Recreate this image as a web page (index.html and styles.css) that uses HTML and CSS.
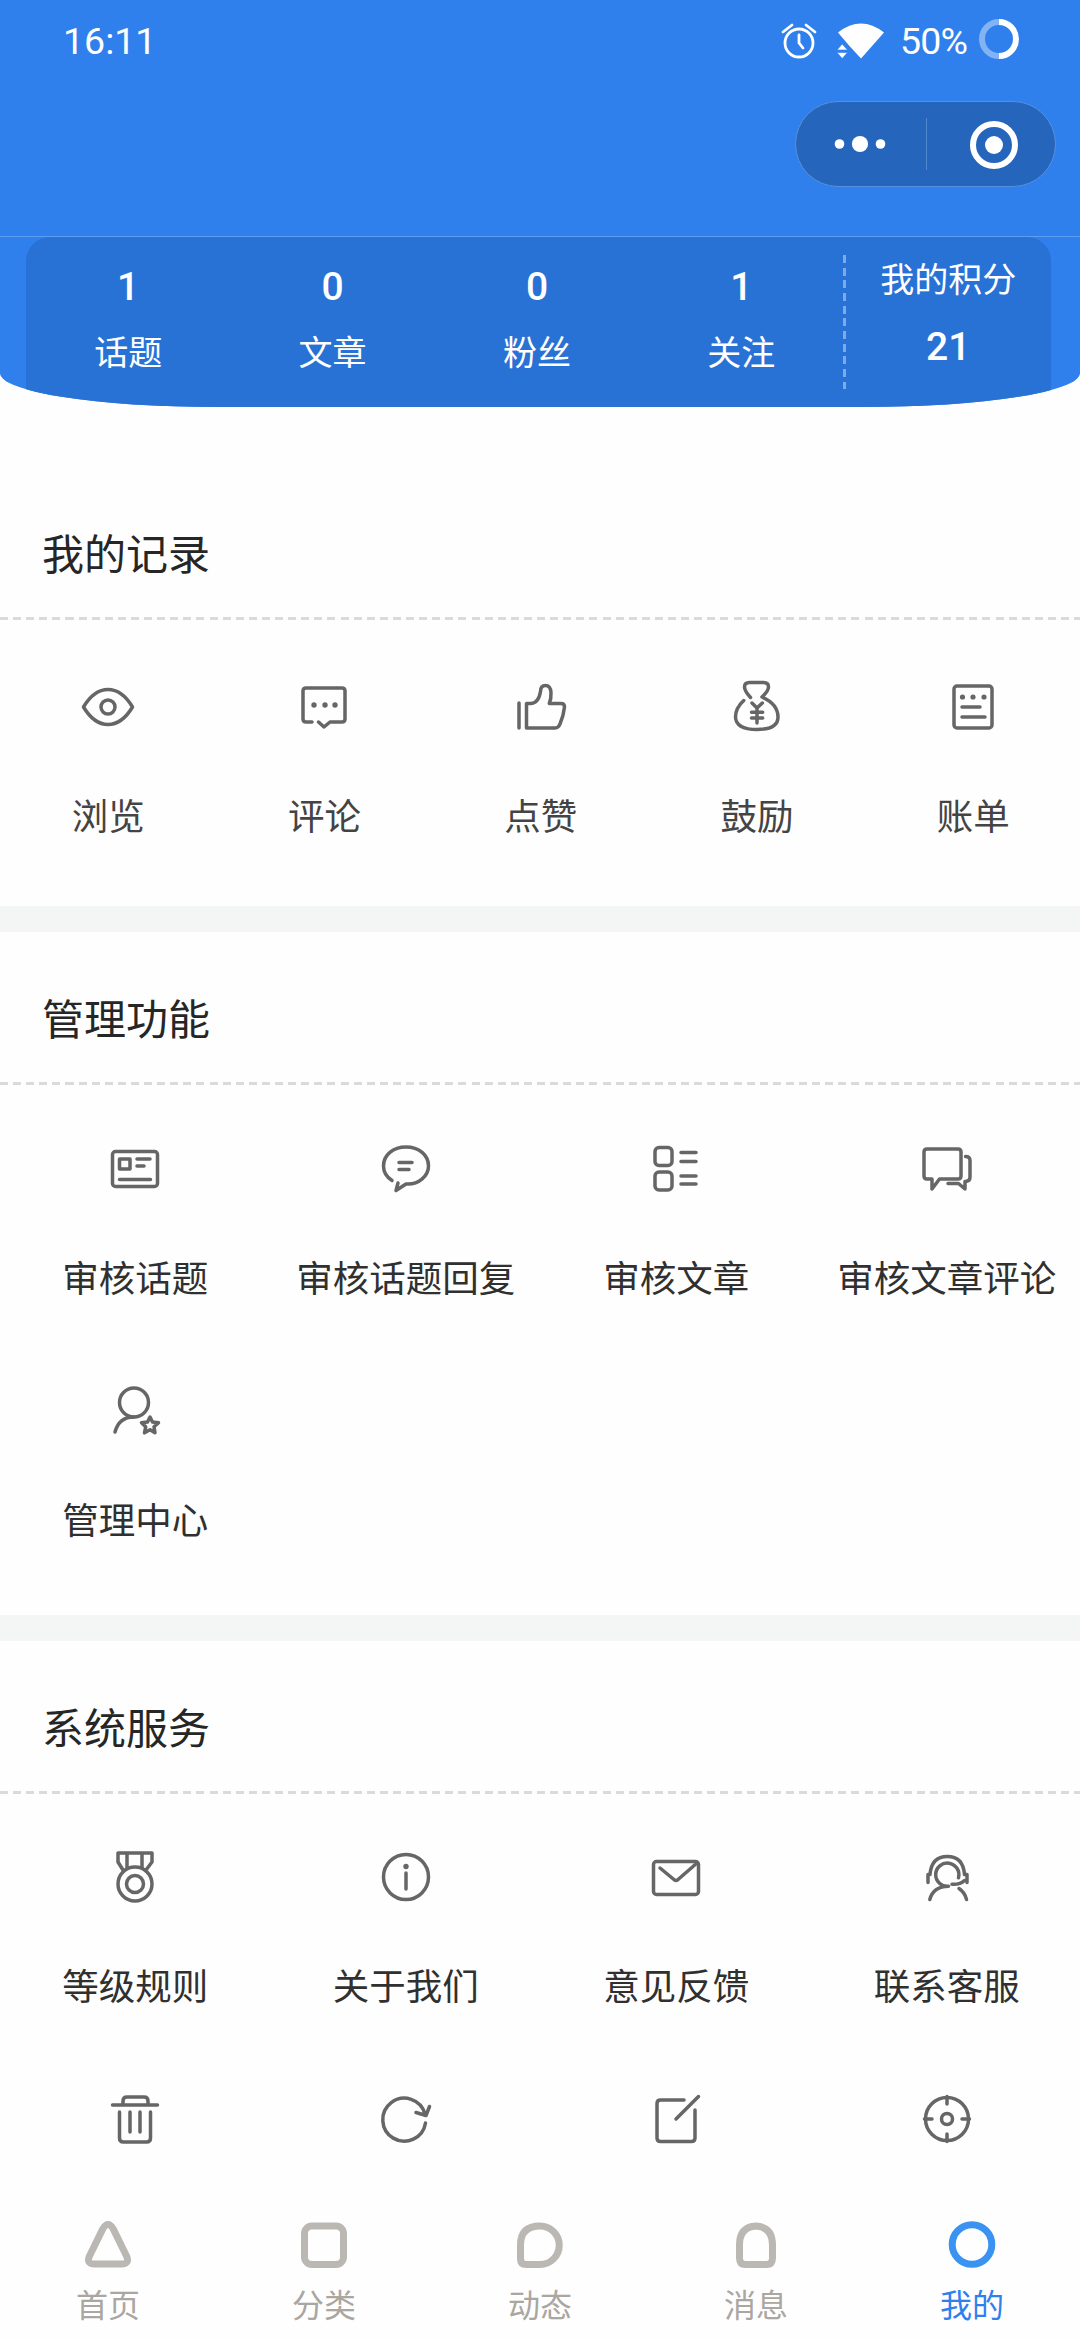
FILE: index.html
```html
<!DOCTYPE html>
<html lang="zh-CN">
<head>
<meta charset="utf-8">
<title>我的</title>
<link rel="stylesheet" href="styles.css">
</head>
<body>
<div class="app">
  <header class="nav">
    <div class="status">
      <span class="time">16:11</span>
      <div class="status-right">
        <svg class="alarm" width="38" height="38" viewBox="0 0 38 38" fill="none" stroke="#fff" stroke-width="2.8" stroke-linecap="round" stroke-linejoin="round"><circle cx="19" cy="21" r="14"/><path d="M19 13v8l4 5M3 10l9-7M35 10l-9-7"/></svg>
        <svg class="wifi" width="48" height="36" viewBox="0 0 48 36" fill="#fff"><path d="M1 9.500Q24-8.500 47 9.500L24 35.500 12 22.500z"/><path d="M0 27h10.500L5.200 21zM0 29.500h10.500L5.200 35.500z" stroke="#2f80ed" stroke-width=".6"/></svg>
        <span class="percent">50%</span>
        <svg class="battery" width="40" height="40" viewBox="0 0 40 40" fill="none" stroke="#fff" stroke-width="6"><path d="M20 3a17 17 0 0 0 0 34" opacity=".4"/><path d="M20 3a17 17 0 0 1 0 34"/></svg>
      </div>
    </div>
    <div class="capsule">
      <svg class="dots" width="52" height="20" viewBox="0 0 52 20" fill="#fff"><circle cx="5.500" cy="10" r="4.800"/><circle cx="26" cy="10" r="8.100"/><circle cx="46.500" cy="10" r="4.800"/></svg>
      <span class="divider"></span>
      <svg class="close" width="50" height="50" viewBox="0 0 50 50"><circle cx="25" cy="25" r="21" fill="none" stroke="#fff" stroke-width="6"/><circle cx="25" cy="25" r="9" fill="#fff"/></svg>
    </div>
  </header>

  <div class="hero">
    <div class="stats">
      <div class="stat"><b>1</b><span>话题</span></div>
      <div class="stat"><b>0</b><span>文章</span></div>
      <div class="stat"><b>0</b><span>粉丝</span></div>
      <div class="stat"><b>1</b><span>关注</span></div>
      <div class="rule"></div>
      <div class="stat points"><span>我的积分</span><b>21</b></div>
    </div>
  </div>

  <main class="content">
    <section class="section first">
      <h2>我的记录</h2>
      <div class="dash"></div>
      <div class="grid five">
        <div class="item"><svg viewBox="0 0 60 60"><path d="M5.500 30Q16 12.500 30 12.500T54.500 30Q44 47.500 30 47.500T5.500 30z"/><circle cx="30" cy="30" r="7"/></svg><span>浏览</span></div>
        <div class="item"><svg viewBox="0 0 60 60"><path d="M18 45h-6q-3 0-3-3V14q0-3 3-3h36q3 0 3 3v28q0 3-3 3H36l-6 5-5.500-5"/><g class="solid"><circle cx="20" cy="28" r="2.700"/><circle cx="31" cy="28" r="2.700"/><circle cx="41" cy="28" r="2.700"/></g></svg><span>评论</span></div>
        <div class="item"><svg viewBox="0 0 60 60"><path d="M8 26v25M15.500 26.500V51H44q3.500 0 5-4 3.500-8 4.500-17 0-3.500-3.500-3.500H38.300q2-5 1.700-11-.5-7-5.500-7t-5 6q-2 12-10 12z"/></svg><span>点赞</span></div>
        <div class="item"><svg viewBox="0 0 60 60"><path d="M23.500 20.500Q17.500 14 17.500 10q0-4.500 5-4.500h14q5 0 5 4.500 0 4-6.500 10Q51 27 51 40q0 12.500-21 12.500T8.500 40q0-9 8.200-16.500M25 26l5 5 5.300-5M30 31v15M24.500 35.300h11.200M24.500 41h11.200"/></svg><span>鼓励</span></div>
        <div class="item"><svg viewBox="0 0 60 60"><rect x="11" y="9" width="38" height="42" rx="3"/><path d="M19 30h18M19 40h23"/><g class="solid"><circle cx="19.500" cy="20" r="2.600"/><circle cx="30" cy="20" r="2.600"/><circle cx="41" cy="20" r="2.600"/></g></svg><span>账单</span></div>
      </div>
    </section>
    <section class="section manage">
      <h2>管理功能</h2>
      <div class="dash"></div>
      <div class="grid four">
        <div class="item"><svg viewBox="0 0 60 60"><rect x="7.500" y="12.500" width="45" height="35" rx="3"/><path d="M14.500 20h10.500v10H14.500zM32 20h13M32 27h7M14.500 40.500h31"/></svg><span>审核话题</span></div>
        <div class="item"><svg viewBox="0 0 60 60"><path d="M16 41.500Q7.500 36 7.500 27C7.500 16 17 8 30 8s22.500 8 22.500 19c0 10-10 19-22.500 18L20 51.500 22 44M23 23.500h13M23 30.500h10"/></svg><span>审核话题回复</span></div>
        <div class="item"><svg viewBox="0 0 60 60"><rect x="9" y="8.500" width="17" height="18" rx="4"/><rect x="9" y="33" width="17" height="18" rx="4"/><path d="M35 13.500h15M35 22.500h15M35 37h15M35 45h15"/></svg><span>审核文章</span></div>
        <div class="item"><svg viewBox="0 0 60 60"><path d="M10 10h31q3 0 3 3v24q0 3-3 3H22.500L15 50V40h-5q-3 0-3-3V13q0-3 3-3zM48.500 17.500q4.500 0 4.500 4V38q0 4.500-5 4.500V50l-6.500-5.500H31"/></svg><span>审核文章评论</span></div>
        <div class="item"><svg viewBox="0 0 60 60"><circle cx="29" cy="21.500" r="14.500"/><path d="M10 51q4-15 19-15M45 36l2.500 5 6 .8-4.500 4 1 6-5-3-5.500 3 1.200-6-4.200-4 6-.8z"/></svg><span>管理中心</span></div>
      </div>
    </section>
    <section class="section service">
      <h2>系统服务</h2>
      <div class="dash"></div>
      <div class="grid four">
        <div class="item"><svg viewBox="0 0 60 60"><circle cx="30" cy="37" r="17"/><circle cx="30" cy="37" r="8.500"/><path d="M18 23l-5-8V6h34v9l-6 8M22 6v15M37 6v15"/></svg><span>等级规则</span></div>
        <div class="item"><svg viewBox="0 0 60 60"><circle cx="30" cy="30" r="22.500"/><path d="M30 26v16"/><circle class="solid" cx="30" cy="19.500" r="2.700"/></svg><span>关于我们</span></div>
        <div class="item"><svg viewBox="0 0 60 60"><rect x="7.500" y="14.500" width="45" height="33" rx="3"/><path d="M14 21l14.500 12q1.500 1 3 0L51 16"/></svg><span>意见反馈</span></div>
        <div class="item"><svg viewBox="0 0 60 60"><path d="M11 35.500v-8h2Q14.500 9.500 30.300 9.500T47.500 27.500h2.500v8"/><path d="M41.500 30.700a11.600 11.600 0 1 0-10 8.500M12.800 52.500q3.500-13 18.700-13.200M42 41.500q6 4 7.500 11M35 37.300q8 .5 12.500-3.800"/></svg><span>联系客服</span></div>
        <div class="item"><svg viewBox="0 0 60 60"><path d="M7.500 16h45M18 16v-4q0-4 4-4h17q4 0 4 4v4M14.500 23v26q0 4 4 4h23q4 0 4-4V23M25 23v20M35 23v20"/></svg></div>
        <div class="item"><svg viewBox="0 0 60 60"><path d="M49.500 34A21.500 21.500 0 1 1 49 25M40 23.500l10 3 3.500-9"/></svg></div>
        <div class="item"><svg viewBox="0 0 60 60"><path d="M38 11H14.500q-3.500 0-3.500 3.500V49q0 3.500 3.500 3.500h31q3.500 0 3.500-3.500V21M30 30L52.500 7.500"/></svg></div>
        <div class="item"><svg viewBox="0 0 60 60"><circle cx="30" cy="30" r="21.500"/><circle cx="30" cy="30" r="5.500"/><path d="M30 7.500V15M30 45v7.500M7.500 30H15M45 30h7.500"/></svg></div>
      </div>
    </section>
  </main>

  <nav class="tabbar">
    <div class="tab"><svg viewBox="0 0 50 50"><path d="M20 8.500q5-8 10 0L43.500 36q3.500 8-5 8h-27q-8.500 0-5-8z"/></svg><span>首页</span></div>
    <div class="tab"><svg viewBox="0 0 50 50"><rect x="5.500" y="6" width="39" height="38.500" rx="7.500"/></svg><span>分类</span></div>
    <div class="tab"><svg viewBox="0 0 50 50"><path d="M25 6a19.250 19.250 0 0 1 0 38.500H11q-5.500 0-5.500-5.500V25Q5.500 6 25 6z"/></svg><span>动态</span></div>
    <div class="tab"><svg viewBox="0 0 50 50"><path d="M25 6Q41.500 7 41.500 25V38q0 6.500-6 6.500h-21q-6 0-6-6.500V25Q8.500 7 25 6z"/></svg><span>消息</span></div>
    <div class="tab active"><svg viewBox="0 0 50 50"><circle cx="25" cy="24.500" r="19.800"/></svg><span>我的</span></div>
  </nav>
</div>
</body>
</html>
```

FILE: styles.css
```css
* { box-sizing: border-box; }

body {
  margin: 0;
  background: #fefefe;
  font-family: Roboto, "Noto Sans CJK SC", sans-serif;
}

.app {
  width: 1080px;
  height: 2340px;
  display: flex;
  flex-direction: column;
  overflow: hidden;
}

.nav {
  flex: none;
  height: 237px;
  background: #2f80ed;
  border-bottom: 1px solid #5c9df2;
  color: #fff;
  display: flex;
  flex-direction: column;
}

.status {
  height: 101px;
  padding: 19px 61px 0 63px;
  display: flex;
  justify-content: space-between;
  align-items: flex-start;
  font-size: 37.500px;
  line-height: 44px;
}

.status-right { display: flex; align-items: flex-start; }
.alarm { margin: 3px 19px 0 0; }
.wifi { margin: 4px 15px 0 0; }
.percent { width: 79px; letter-spacing: -0.8px; }

.capsule {
  align-self: flex-end;
  width: 261px;
  height: 86px;
  margin-right: 24px;
  padding: 0 36px 0 38px;
  display: flex;
  align-items: center;
  justify-content: space-between;
  border: 1px solid #5590dd;
  border-radius: 43px;
  background: #2665bc;
}
.divider { width: 1px; height: 52px; margin-right: 2px; background: #5187cc; }
.close { margin-top: 2px; }

.hero {
  flex: none;
  height: 170px;
  padding: 0 29px 0 26px;
  background: #2f80ed;
  border-radius: 0 0 216px 216px / 0 0 34px 34px;
  overflow: hidden;
}

.stats {
  height: 170px;
  display: flex;
  border-radius: 24px 24px 0 0;
  background: #2972d5;
  color: #fff;
}

.stat {
  width: 204.400px;
  padding-top: 25px;
  display: flex;
  flex-direction: column;
  align-items: center;
  gap: 16px;
  font-size: 34px;
  line-height: 50px;
}
.stat b { font-size: 39px; font-weight: 500; }
.points { flex: 1; width: auto; padding-top: 18px; gap: 17px; }

.rule {
  width: 3px;
  height: 134px;
  margin-top: 18px;
  margin-left: -1px;
  background: repeating-linear-gradient(to bottom, #7eabe8 0 8px, transparent 8px 12.650px);
}

.content { flex: 1; min-height: 0; overflow: hidden; padding-top: 60px; }

.section { border-bottom: 26px solid #f4f6f6; }
.first { height: 465px; }
.manage { height: 709px; }
.service { border-bottom: 0; }

.section h2 {
  height: 150px;
  margin: 0;
  padding: 59px 42px 0;
  font-size: 42px;
  font-weight: 400;
  line-height: 60px;
  color: #262626;
}

.dash {
  height: 3px;
  background: repeating-linear-gradient(to right, #dadada 0 8px, transparent 8px 13.100px);
}

.grid { display: grid; grid-auto-rows: 242px; padding-top: 54px; }
.service .grid { padding-top: 53px; }
.grid.five { grid-template-columns: repeat(5, 216.300px); padding-top: 57px; }
.four { grid-template-columns: repeat(4, 270.500px); }

.item {
  display: flex;
  flex-direction: column;
  align-items: center;
  gap: 54px;
  font-size: 36.500px;
  line-height: 54px;
  color: #303030;
  white-space: nowrap;
}
.five .item { color: #444; }

.item svg {
  width: 60px;
  height: 60px;
  fill: none;
  stroke: #666;
  stroke-width: 3.500;
  stroke-linecap: round;
  stroke-linejoin: round;
}
.item .solid { fill: #666; stroke: none; }

.tabbar {
  flex: none;
  height: 146px;
  padding-top: 26px;
  display: grid;
  grid-template-columns: repeat(5, 1fr);
  background: #fefefe;
}

.tab {
  display: flex;
  flex-direction: column;
  align-items: center;
  gap: 13px;
  font-size: 32px;
  line-height: 46px;
  color: #aaa6a1;
}
.tab svg { width: 50px; height: 50px; fill: none; stroke: #bbb8b3; stroke-width: 7; }
.active { color: #2f80ed; }
.active svg { stroke: #3a93f0; }
```
